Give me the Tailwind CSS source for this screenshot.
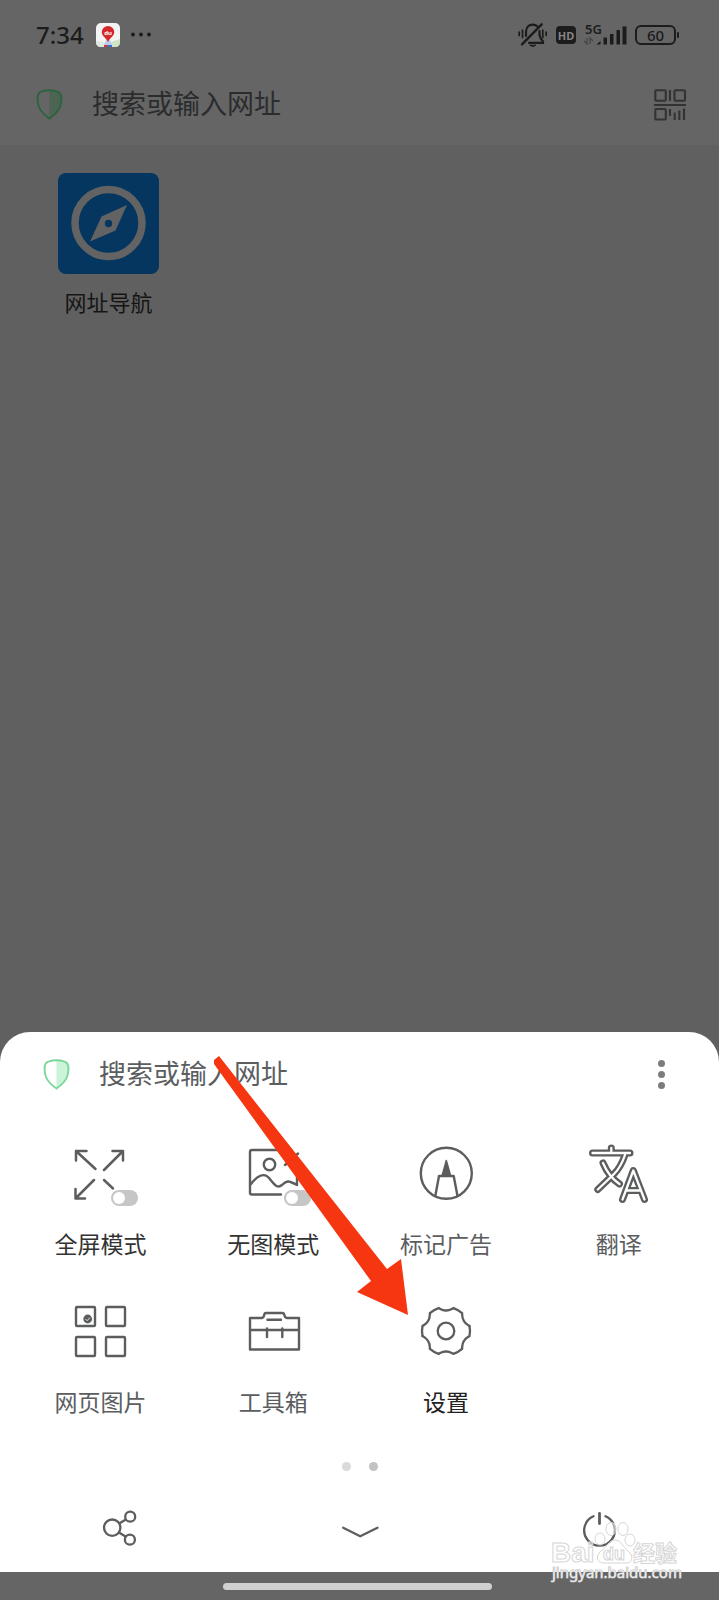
<!DOCTYPE html>
<html lang="zh-CN">
<head>
<meta charset="utf-8">
<meta name="viewport" content="width=device-width, initial-scale=1">
<title>网址导航</title>
<script src="https://cdn.jsdelivr.net/npm/@tailwindcss/browser@4"></script>
</head>
<body class="relative flex min-h-screen flex-col bg-[#606060] font-['Noto_Sans','Noto_Sans_CJK_SC',sans-serif]">

<header class="bg-[#656565]">
  <div class="flex h-[70px] items-center justify-between pl-9 pr-10 text-[#1c1c1c]">
    <div class="flex items-center">
      <span class="text-[24px] font-medium leading-8">7:34</span>
      <svg class="ml-3 size-6" viewBox="0 0 24 24" aria-hidden="true">
        <rect width="24" height="24" rx="5" fill="#f4f4f4"/>
        <path d="M0 18L9 19 8 24H5Q0 24 0 19Z" fill="#dfe9e4"/><path d="M15 19L24 16V19Q24 24 19 24H16Z" fill="#cfe5c4"/>
        <path d="M10 17H14L16 22H8Z" fill="#b9cdea"/><path d="M8 22H16V24H8Z" fill="#3b6fc4"/><path d="M8 22H11V24H8Z" fill="#d33"/>
        <path d="M12 3a6.2 6.2 0 0 0-6.2 6.2C5.800 13 9.500 14 12 19C14.500 14 18.200 13 18.200 9.200A6.200 6.200 0 0 0 12 3Z" fill="#d4292c"/>
        <text x="12" y="11.500" font-size="6" font-weight="700" text-anchor="middle" fill="#fff" font-family="Noto Sans">du</text>
      </svg>
      <svg class="ml-2.5 h-6 w-6" viewBox="0 0 24 24" fill="currentColor" aria-hidden="true"><circle cx="3" cy="11.500" r="1.900"/><circle cx="11" cy="11.500" r="1.900"/><circle cx="19" cy="11.500" r="1.900"/></svg>
    </div>
    <div class="flex items-center">
      <svg class="h-[26px] w-[30px]" viewBox="0 0 30 26" fill="none" stroke="currentColor" stroke-width="2.200" stroke-linecap="round" aria-hidden="true">
        <path d="M8 14V10C8 5 11 2.600 14.700 2.600Q17.500 2.600 19.500 4.500M21.500 9V13Q22 16 25 19.500V20.800H11"/>
        <path d="M23.700 2.300L4 22.300" stroke-width="2.400"/><path d="M12 23.500Q14.700 25.500 17.500 23.500Z" fill="currentColor" stroke-width="1"/>
        <path d="M1.200 10V13.500M4.500 8V15.500M24.800 8V15.500M28.200 10V13.500" stroke-width="1.700"/>
      </svg>
      <span class="ml-2 flex h-[18px] w-5 items-center justify-center rounded bg-[#1c1c1c] text-[11px] font-bold leading-none text-[#858585]">HD</span>
      <svg class="ml-2 h-6 w-[43px]" viewBox="0 0 43 24" aria-hidden="true">
        <text x="1" y="11" font-size="13" font-weight="600" font-family="Noto Sans" fill="#1c1c1c">5G</text>
        <path d="M12.500 21.500L16.500 18V21.500ZM19.500 14.500H23V21.500H19.500ZM26 11H29.500V21.500H26ZM32.500 7H36V21.500H32.500ZM38.500 3.500H42.500V21.500H38.500Z" fill="#1c1c1c"/>
        <path d="M0 18L3 21V15M9 18L6 15V21" fill="none" stroke="#454545" stroke-width="1.300"/>
      </svg>
      <span class="ml-2 flex h-5 w-[41px] items-center justify-center rounded-md border-2 border-[#1c1c1c] text-[15px] font-medium leading-none">60</span>
      <span class="ml-px h-1.5 w-0.5 rounded-full bg-[#1c1c1c]"></span>
    </div>
  </div>
  <div class="flex h-[75px] items-center pb-1.5 pl-9 pr-8">
    <svg class="h-[31px] w-[27px] shrink-0" viewBox="0 0 27 31" aria-hidden="true"><path d="M13.500 2V29C19 25.500 25.500 21 25 6C22 3 18 2 13.500 2Z" fill="#4c6552"/><path d="M13.500 1.300C18.500 1.300 22.500 2.500 24.300 4.500C26 7 25.800 13 24 18C22 23 18 26.500 13.500 29.500C9 26.500 5 23 3 18C1.200 13 1 7 2.700 4.500C4.500 2.500 8.500 1.300 13.500 1.300Z" fill="none" stroke="#2b6340" stroke-width="1.900"/></svg>
    <input type="text" aria-label="网址" placeholder="搜索或输入网址" class="ml-[29px] h-10 min-w-0 flex-1 bg-transparent text-[27px] text-[#2b2c2d] outline-none placeholder:text-[#2b2c2d]">
    <button type="button" aria-label="扫一扫"><svg class="h-8 w-[33px]" viewBox="0 0 33 32" fill="none" stroke="#323335" stroke-width="2.100" aria-hidden="true"><rect x="1.300" y="1.300" width="10.500" height="10.500" rx="1"/><rect x="20.500" y="1.300" width="10.500" height="10.500" rx="1"/><rect x="1.300" y="20" width="10.500" height="10.500" rx="1"/><path d="M16 1V12M0 16H32M16 20V27M20.700 23.500V31M25.300 21.500V31M30 19.500V31"/></svg></button>
  </div>
</header>

<main class="flex-1 pl-[58px] pt-7">
  <a href="#" class="flex w-[101px] flex-col items-center">
    <svg class="size-[101px]" viewBox="0 0 101 101" aria-hidden="true"><rect width="101" height="101" rx="8" fill="#04365f"/><circle cx="50.500" cy="50" r="33.500" fill="none" stroke="#636363" stroke-width="7.500"/><path fill-rule="evenodd" d="M69 32L43.500 43.500 32 68.500 57.500 57.500ZM50.500 46.800a3.700 3.700 0 1 1 0 7.400a3.700 3.700 0 0 1 0-7.400Z" fill="#636363"/></svg>
    <span class="mt-3 whitespace-nowrap text-[22px] leading-8 text-[#151515]">网址导航</span>
  </a>
</main>

<section aria-label="菜单" class="rounded-t-[30px] bg-white text-[#5b5d5f]">
  <div class="flex h-[84px] items-center pl-[43px] pr-[42px]">
    <svg class="h-[31px] w-[27px] shrink-0" viewBox="0 0 27 31" aria-hidden="true"><path d="M13.500 2V29C19 25.500 25.500 21 25 6C22 3 18 2 13.500 2Z" fill="#cbf3d8"/><path d="M13.500 1.300C18.500 1.300 22.500 2.500 24.300 4.500C26 7 25.800 13 24 18C22 23 18 26.500 13.500 29.500C9 26.500 5 23 3 18C1.200 13 1 7 2.700 4.500C4.500 2.500 8.500 1.300 13.500 1.300Z" fill="none" stroke="#7bd69a" stroke-width="1.900"/></svg>
    <input type="text" aria-label="搜索" placeholder="搜索或输入网址" class="ml-[29px] h-10 min-w-0 flex-1 bg-transparent text-[27px] outline-none placeholder:text-[#5b5d5f]">
    <button type="button" aria-label="更多" class="flex w-[31px] flex-col items-center gap-1"><i class="size-[7px] rounded-full bg-[#7c7c7e]"></i><i class="size-[7px] rounded-full bg-[#7c7c7e]"></i><i class="size-[7px] rounded-full bg-[#7c7c7e]"></i></button>
  </div>

  <div class="grid grid-cols-4 gap-y-10 px-3.5 pt-[26px] text-[23px] leading-8">
    <label class="flex flex-col items-center gap-[22px] text-[#333]">
      <span class="relative">
        <svg class="h-16 w-20" viewBox="0 0 80 64" fill="none" stroke="#5b5d5f" stroke-width="2.500" stroke-linecap="round" stroke-linejoin="round" aria-hidden="true"><path d="M26.500 9H16V18.500M16 9L35.500 27M52.500 9H63V18.500M63 9L44 28M25 56.500H15.500V47M15.500 56.500L34 38M44 38L53 46.500"/></svg>
        <input type="checkbox" role="switch" class="absolute bottom-0 right-0.5 h-4 w-[27px] appearance-none rounded-full bg-[#c6c6c6] before:absolute before:left-0.5 before:top-0.5 before:size-3 before:rounded-full before:bg-white">
      </span>
      <span>全屏模式</span>
    </label>
    <label class="flex flex-col items-center gap-[22px] text-[#333]">
      <span class="relative">
        <svg class="h-16 w-20" viewBox="0 0 80 64" fill="none" stroke="#5b5d5f" stroke-width="2.400" stroke-linecap="round" stroke-linejoin="round" aria-hidden="true"><path d="M48 52.500H19Q17 52.500 17 50.500V10Q17 8 19 8H58M64 28V43M65 11.500L52 23M18 42C24 34 31 30 36 36C41 42 44 47 49 43C54 38 56 38.500 64 43"/><circle cx="36.500" cy="22.500" r="5.700"/></svg>
        <input type="checkbox" role="switch" class="absolute bottom-0 right-0.5 h-4 w-[27px] appearance-none rounded-full bg-[#c6c6c6] before:absolute before:left-0.5 before:top-0.5 before:size-3 before:rounded-full before:bg-white">
      </span>
      <span>无图模式</span>
    </label>
    <button type="button" class="flex flex-col items-center gap-[22px]">
      <svg class="h-16 w-20" viewBox="0 0 80 64" fill="none" stroke="#5b5d5f" stroke-width="2.400" stroke-linejoin="round" aria-hidden="true"><circle cx="40.300" cy="31.300" r="25.500"/><path d="M29.300 54L33 34H47.700L51.500 54"/><path d="M40.300 18.500L36 34H44.700Z" fill="#5b5d5f" stroke-width="1.500"/></svg>
      <span>标记广告</span>
    </button>
    <button type="button" class="flex flex-col items-center gap-[22px]">
      <svg class="h-16 w-20" viewBox="0 0 80 64" fill="none" stroke-linecap="round" stroke-linejoin="round" aria-hidden="true">
        <g stroke="#5b5d5f" stroke-width="7"><path d="M13.500 11H51M32.300 6V11M46 13Q42 25 35 32L18.800 47.500M24 21Q30 35 40.500 42"/></g>
        <g stroke="#fff" stroke-width="2.300"><path d="M13.500 11H51M32.300 6V11M46 13Q42 25 35 32L18.800 47.500M24 21Q30 35 40.500 42"/></g>
        <path d="M43.500 57L54.300 28.500L65.500 57M48 48.500H61" stroke="#fff" stroke-width="9"/>
        <path d="M43.500 57.500L54.300 28.500L65.500 57.500M48 48.500H61" stroke="#5b5d5f" stroke-width="7"/><path d="M43.500 57.500L54.300 28.500L65.500 57.500M48 48.500H61" stroke="#fff" stroke-width="2.300"/>
      </svg>
      <span>翻译</span>
    </button>
    <button type="button" class="flex flex-col items-center gap-[22px]">
      <svg class="h-16 w-20" viewBox="0 0 80 64" fill="none" stroke="#5b5d5f" stroke-width="2.400" aria-hidden="true"><rect x="16" y="7" width="19" height="19" rx="1"/><rect x="46" y="7" width="19" height="19" rx="1"/><rect x="16" y="37" width="19" height="19" rx="1"/><rect x="46" y="37" width="19" height="19" rx="1"/><circle cx="27.700" cy="19" r="4.400" fill="#5b5d5f" stroke="none"/><path d="M25.500 19L27.200 20.700 30 17.500" stroke="#fff" stroke-width=".8"/></svg>
      <span>网页图片</span>
    </button>
    <button type="button" class="flex flex-col items-center gap-[22px]">
      <svg class="h-16 w-20" viewBox="0 0 80 64" fill="none" stroke="#5b5d5f" stroke-width="2.400" stroke-linecap="round" stroke-linejoin="round" aria-hidden="true"><path d="M17 18H28.500Q30.500 18 31 15.500T33 13H49.500Q51 13 51.500 15.500T54.500 18H66V49.500H17ZM17 30H66M34.500 19.700H48M34 28.500V37M49.300 28.500V37"/></svg>
      <span>工具箱</span>
    </button>
    <button type="button" class="flex flex-col items-center gap-[22px] text-[#222]">
      <svg class="h-16 w-20" viewBox="0 0 80 64" fill="none" stroke="#5b5d5f" stroke-width="2.300" stroke-linecap="round" aria-hidden="true">
        <defs><path id="cog" d="M63.500 26A25 25 0 0 1 63.500 36C61.300 37.600 59.300 38.200 57.800 41.200C56 44 56.300 46.200 56 48.800"/></defs>
        <use href="#cog"/><use href="#cog" transform="rotate(60 40 31)"/><use href="#cog" transform="rotate(120 40 31)"/><use href="#cog" transform="rotate(180 40 31)"/><use href="#cog" transform="rotate(240 40 31)"/><use href="#cog" transform="rotate(300 40 31)"/>
        <circle cx="40" cy="31" r="8.300"/>
      </svg>
      <span>设置</span>
    </button>
  </div>

  <div class="flex h-[70px] justify-center gap-[18px] pt-11"><i class="size-[9px] rounded-full bg-[#dadada]"></i><i class="size-[9px] rounded-full bg-[#c2c2c2]"></i></div>

  <div class="grid h-[84px] grid-cols-3 place-items-center">
    <button type="button" aria-label="分享"><svg class="size-10" viewBox="0 0 40 40" fill="none" stroke="#5b5d5f" stroke-width="2.300" aria-hidden="true"><circle cx="12.200" cy="17.700" r="8.200"/><circle cx="30.200" cy="6.700" r="5"/><circle cx="29.900" cy="29.700" r="5"/><path d="M19.300 13.500L25.800 9.500M19 22.500L25.500 26.500"/></svg></button>
    <button type="button" aria-label="收起"><svg class="size-10" viewBox="0 0 40 40" fill="none" stroke="#5b5d5f" stroke-width="2.300" stroke-linecap="round" stroke-linejoin="round" aria-hidden="true"><path d="M4.200 17.700L21.200 26.300L38.500 17.700"/></svg></button>
    <button type="button" aria-label="退出"><svg class="size-10" viewBox="0 0 40 40" fill="none" stroke="#5b5d5f" stroke-width="2.300" stroke-linecap="round" aria-hidden="true"><path d="M14.500 6.300A15.300 15.300 0 1 0 26.500 6.300"/><path d="M20.500 3.500V13.500" stroke-width="2.800"/></svg></button>
  </div>
</section>

<footer class="flex h-7 items-center justify-center bg-[#656565] pr-1"><div class="h-[7px] w-[269px] rounded-full bg-[#d0d0d0]"></div></footer>

<!-- Pointer to the settings entry -->
<svg class="pointer-events-none absolute bottom-[280px] left-[210px] h-[270px] w-[200px]" viewBox="0 0 200 270" aria-hidden="true"><path d="M4 10L9 6L177 219L191 209L198 265L147 242L161 231L4 14Z" fill="#f63610"/></svg>

<!-- Watermark -->
<svg class="pointer-events-none absolute bottom-2 right-9 h-[76px] w-[134px]" viewBox="0 0 134 76" aria-hidden="true">
  <g fill="#fff" fill-opacity=".5" stroke="#d6d6d6" stroke-width="1">
    <ellipse cx="51" cy="23" rx="5" ry="6"/><ellipse cx="62" cy="13" rx="5" ry="6.500"/><ellipse cx="74" cy="13" rx="5" ry="6.500"/><ellipse cx="81" cy="24" rx="5" ry="6"/>
    <path d="M66 24C60 24 58 31 52 35C46 40 48 47 55 47H77C84 47 85 40 79 35C74 31 72 24 66 24Z"/>
    <text x="2" y="46" font-size="28" font-weight="700" font-family="Liberation Sans">Bai</text>
    <text x="54" y="44" font-size="18" font-weight="700" font-family="Liberation Sans">du</text>
    <text x="84" y="45" font-size="22" font-weight="700" font-family="Noto Sans CJK SC">经验</text>
  </g>
  <text x="3" y="62" font-size="15" fill="#ededed" stroke="#b5b5b5" stroke-width="1" paint-order="stroke" font-family="Noto Sans, sans-serif">jingyan.baidu.com</text>
</svg>
</body>
</html>
